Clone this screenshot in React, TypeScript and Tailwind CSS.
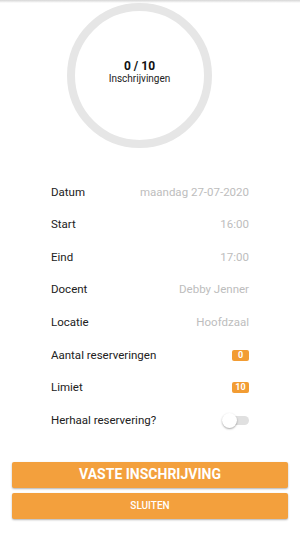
import React from "react";

const rows: { label: string; value: string }[] = [
  { label: "Datum", value: "maandag 27-07-2020" },
  { label: "Start", value: "16:00" },
  { label: "Eind", value: "17:00" },
  { label: "Docent", value: "Debby Jenner" },
  { label: "Locatie", value: "Hoofdzaal" },
];

function Badge({ children }: { children: React.ReactNode }) {
  return (
    <span className="inline-flex h-[11px] min-w-[17px] items-center justify-center rounded-[2px] bg-[#f29c33] px-[3px] text-[9px] font-bold leading-none text-white">
      {children}
    </span>
  );
}

function Row({ label, children }: { label: string; children: React.ReactNode }) {
  return (
    <div className="flex h-[32.6px] items-center justify-between">
      <span className="text-[11.5px] text-[#212121]">{label}</span>
      {children}
    </div>
  );
}

export default function App() {
  return (
    <div
      className="relative h-[533px] w-[300px] overflow-hidden bg-white"
      style={{ fontFamily: "Roboto, 'Liberation Sans', sans-serif" }}
    >
      <div className="h-[3px] w-full bg-gradient-to-b from-[#d6d6d6] to-white" />
      <div className="ml-[67px] flex h-[145px] w-[145px] flex-col items-center justify-center rounded-full border-[8px] border-[#e6e6e6]">
        <div className="-mt-[8px] text-[12px] font-bold leading-[14px] text-[#111]">0 / 10</div>
        <div className="text-[10px] leading-[12px] text-[#222]">Inschrijvingen</div>
      </div>

      <div className="mt-[28px] px-[51px]">
        {rows.map((r) => (
          <Row key={r.label} label={r.label}>
            <span className="text-[11.5px] text-[#bdbdbd]">{r.value}</span>
          </Row>
        ))}
        <Row label="Aantal reserveringen">
          <Badge>0</Badge>
        </Row>
        <Row label="Limiet">
          <Badge>10</Badge>
        </Row>
        <Row label="Herhaal reservering?">
          <div className="relative h-[9px] w-[22px] rounded-full bg-[#e0e0e0]">
            <div className="absolute -left-[5px] -top-[3px] h-[15px] w-[15px] rounded-full bg-white shadow-[0_1px_2px_rgba(0,0,0,0.35)]" />
          </div>
        </Row>
      </div>

      <div className="mt-[25px] flex flex-col gap-[5px] px-[12px]">
        <button className="flex h-[26px] items-center justify-center rounded-[2px] bg-[#f3a03d] text-[14px] font-bold uppercase text-white shadow-[0_1px_2px_rgba(0,0,0,0.3)]">
          Vaste inschrijving
        </button>
        <button className="flex h-[26px] items-center justify-center rounded-[2px] bg-[#f3a03d] text-[10px] font-medium uppercase text-white shadow-[0_1px_2px_rgba(0,0,0,0.3)]">
          Sluiten
        </button>
      </div>
    </div>
  );
}
